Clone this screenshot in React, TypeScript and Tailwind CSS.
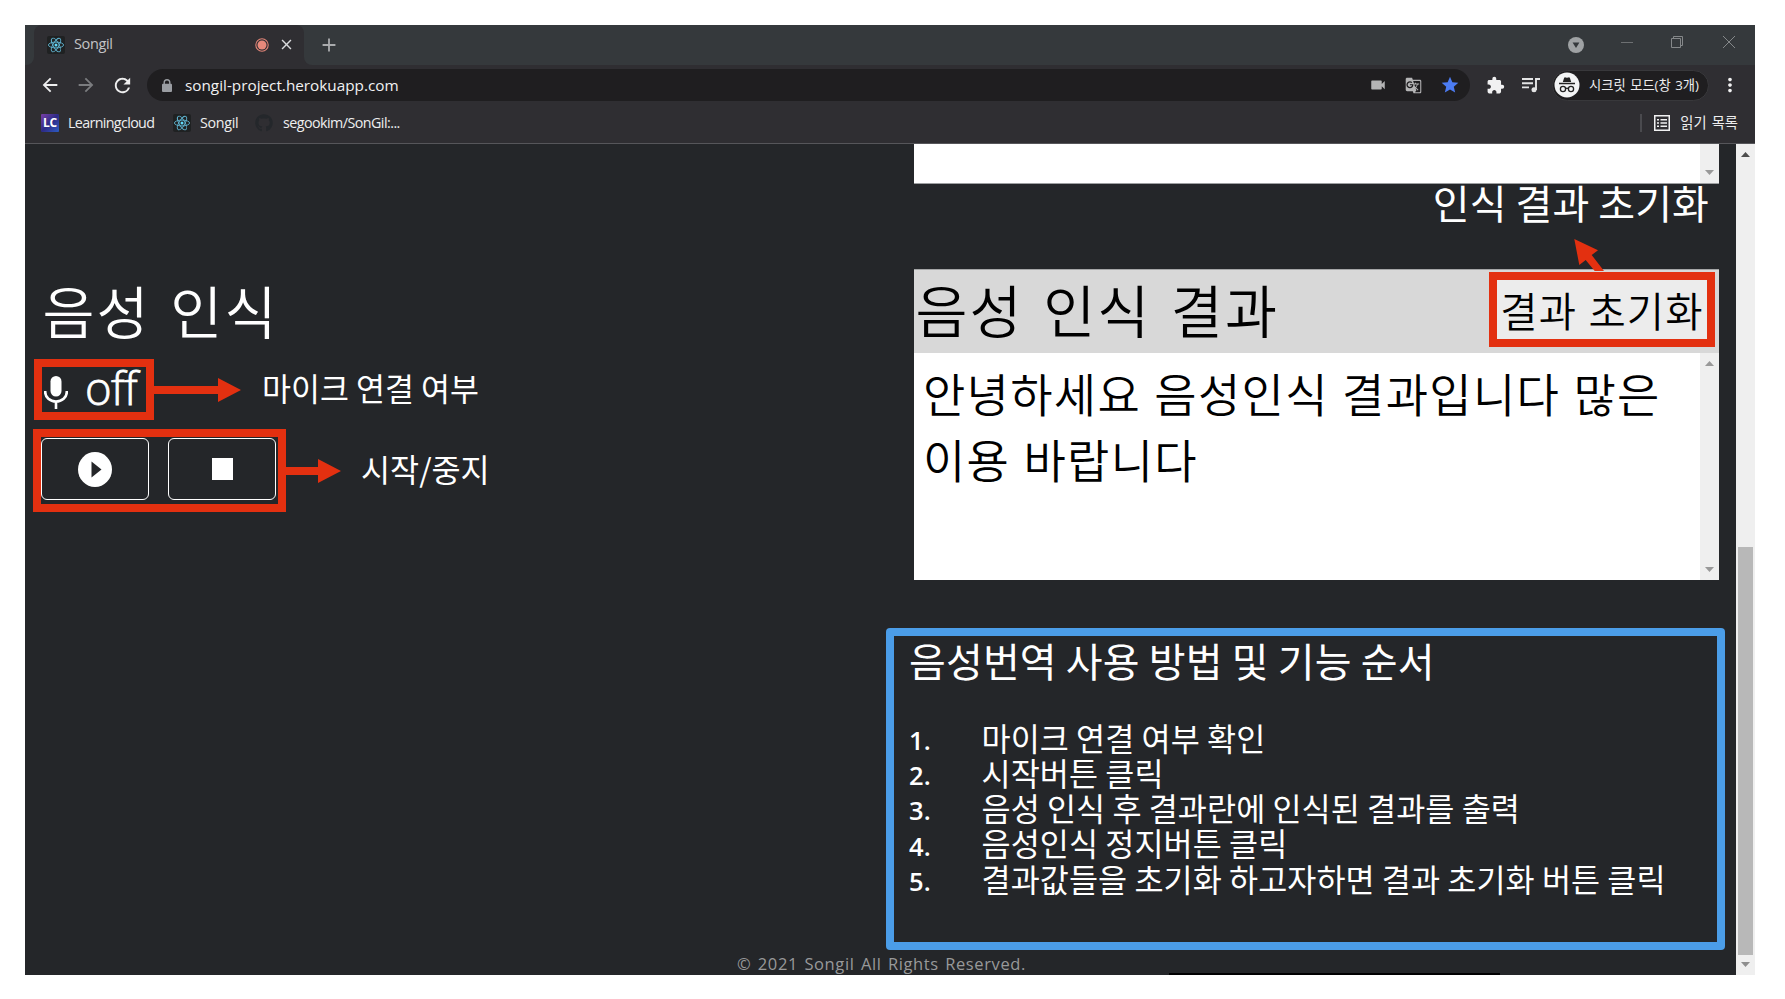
import React from 'react';
import {
  MdAdd,
  MdArrowBack,
  MdArrowForward,
  MdClose,
  MdExtension,
  MdGTranslate,
  MdMoreVert,
  MdRefresh,
  MdStar,
  MdVideocam,
} from 'react-icons/md';
import { FaGithub } from 'react-icons/fa';

const steps = [
  '마이크 연결 여부 확인',
  '시작버튼 클릭',
  '음성 인식 후 결과란에 인식된 결과를 출력',
  '음성인식 정지버튼 클릭',
  '결과값들을 초기화 하고자하면 결과 초기화 버튼 클릭',
];

function ReactLogo() {
  return (
    <svg viewBox="0 0 18 18" className="size-[18px] shrink-0">
      <rect width="18" height="18" rx="2" fill="#1f2122" />
      <g fill="none" stroke="#5fb2cf" strokeWidth="0.9">
        <ellipse cx="9" cy="9" rx="7.6" ry="2.9" />
        <ellipse cx="9" cy="9" rx="7.6" ry="2.9" transform="rotate(60 9 9)" />
        <ellipse cx="9" cy="9" rx="7.6" ry="2.9" transform="rotate(120 9 9)" />
      </g>
      <circle cx="9" cy="9" r="1.5" fill="#61dafb" />
    </svg>
  );
}

function Triangle({ up = false, color }: { up?: boolean; color: string }) {
  return (
    <svg viewBox="0 0 9 5" className="h-[5px] w-[9px]">
      <path d={up ? 'M0 5 4.500 0 9 5Z' : 'M0 0h9L4.500 5Z'} fill={color} />
    </svg>
  );
}

function TabStrip() {
  return (
    <div className="flex h-[40px] items-stretch bg-[#35393c]">
      <div className="w-[9px] bg-[#2f2e32]">
        <div className="h-full rounded-br-[8px] bg-[#35393c]" />
      </div>
      <div className="flex w-[270px] items-center rounded-t-[8px] bg-[#2f2e32] pr-[9px] pb-px pl-[13px]">
        <ReactLogo />
        <span className="ml-[9px] flex-1 pb-px text-[14.500px] leading-5 tracking-[-0.350px] text-[#c3c4c6]">Songil</span>
        <svg viewBox="0 0 14 14" className="size-[14px]">
          <circle cx="7" cy="7" r="6.200" fill="none" stroke="#e08477" strokeWidth="1.100" />
          <circle cx="7" cy="7" r="4.500" fill="#e8897b" />
        </svg>
        <MdClose className="ml-[9px] size-[17px] text-[#dadbdd]" />
      </div>
      <div className="flex flex-1 items-center bg-[#2f2e32]">
        <div className="flex h-full w-full items-center rounded-bl-[8px] bg-[#35393c]">
          <MdAdd className="ml-[14px] size-[22px] text-[#a9abad]" />
          <div className="flex-1" />
          <svg viewBox="0 0 16 16" className="size-[16px]">
            <circle cx="8" cy="8" r="8" fill="#9fa2a4" />
            <path d="M4.600 5.600h6.800L8 11Z" fill="#35393c" />
          </svg>
          <svg viewBox="0 0 12 12" className="mb-[6px] ml-[37px] size-[12px]" stroke="#6d7072" fill="none">
            <path d="M0 6.500h12" />
          </svg>
          <svg viewBox="0 0 12 12" className="mb-[6px] ml-[38px] size-[12px]" stroke="#85888a" fill="none">
            <path d="M.5 2.500h9v9h-9ZM2.500 2.500v-2h9v9h-2" />
          </svg>
          <svg viewBox="0 0 12 12" className="mr-[20px] mb-[6px] ml-[40px] size-[12px]" stroke="#85888a" fill="none">
            <path d="m0 0 12 12M12 0 0 12" />
          </svg>
        </div>
      </div>
    </div>
  );
}

function Toolbar() {
  return (
    <div className="flex h-[40px] items-center">
      <MdArrowBack className="ml-[14px] size-[22px] text-[#eeeeef]" />
      <MdArrowForward className="ml-[14px] size-[22px] text-[#7b7c7f]" />
      <MdRefresh className="ml-[14px] size-[23px] text-[#eeeeef]" />
      <div className="ml-[13px] flex h-[32px] w-[1323px] items-center rounded-full bg-[#1f1e20]">
        <svg viewBox="0 0 10 13" className="ml-[15px] h-[13px] w-[10px]">
          <path d="M2.200 6V3.600a2.800 2.800 0 0 1 5.600 0V6" fill="none" stroke="#9a9da2" strokeWidth="1.400" />
          <rect y="4.800" width="10" height="8.200" rx="1" fill="#9a9da2" />
        </svg>
        <span className="ml-[13px] flex-1 text-[15.300px] leading-5 text-[#f1f1f2]">songil-project.herokuapp.com</span>
        <MdVideocam className="size-[18px] text-[#b5b5b6]" />
        <MdGTranslate className="ml-[18px] size-[17px] text-[#b5b5b6]" />
        <MdStar className="mr-[10px] ml-[18px] size-[20px] text-[#4c7cf3]" />
      </div>
      <MdExtension className="ml-[16px] size-[19px] text-[#f1f1f2]" />
      <svg viewBox="0 0 18 16" className="ml-[17px] h-[16px] w-[18px]" fill="none" stroke="#e4e4e5" strokeWidth="1.900">
        <path d="M0 2h11M0 6.200h11M0 10.400h7M14 13V2h4" />
        <circle cx="12" cy="12.800" r="2.500" fill="#e4e4e5" stroke="none" />
      </svg>
      <div className="ml-[12px] flex h-[31px] w-[157px] items-center rounded-full border border-[#38383b] bg-[#1f1e20]">
        <svg viewBox="0 0 26 26" className="ml-px size-[26px]">
          <circle cx="13" cy="13" r="12.500" fill="#f3f4f5" />
          <path d="M8.800 10 10 6.200q.4-1.200 1.600-.8L13 5.800l1.400-.4q1.200-.4 1.600.8L17.200 10Z" fill="#222" />
          <path d="M5 11.500h16" stroke="#222" strokeWidth="1.500" />
          <g fill="none" stroke="#222" strokeWidth="1.300">
            <circle cx="9" cy="17" r="2.600" />
            <circle cx="17" cy="17" r="2.600" />
            <path d="M11.600 16.600q1.400-.8 2.800 0" />
          </g>
        </svg>
        <span className="ml-[9px] text-[13.300px] leading-5 [word-spacing:1px] whitespace-nowrap text-[#ededee]">시크릿 모드(창 3개)</span>
      </div>
      <MdMoreVert className="ml-[10px] size-[22px] text-[#f1f1f2]" />
    </div>
  );
}

function Bookmarks() {
  return (
    <div className="flex h-[39px] items-center border-b border-[#56565a] pb-[3px] pl-[16px] text-[14.300px] leading-5 tracking-[-0.650px] text-[#eeeeef]">
      <div className="flex size-[18px] items-center justify-center rounded-[1px] bg-linear-to-br from-[#7b3fa8] via-[#2d2a86] to-[#2a5cc4] text-[12px] font-bold tracking-tight text-white">
        LC
      </div>
      <span className="ml-[9px] w-[105px]">Learningcloud</span>
      <ReactLogo />
      <span className="ml-[9px] w-[55px] tracking-[-0.300px]">Songil</span>
      <FaGithub className="size-[18px] text-[#24272b]" />
      <span className="ml-[10px] flex-1 tracking-[-0.550px]">segookim/SonGil:...</span>
      <div className="h-[18px] w-[2px] bg-[#4a4a4e]" />
      <svg viewBox="0 0 16 16" className="ml-[12px] size-[16px]" fill="none" stroke="#f1f1f2" strokeWidth="1.500">
        <rect x=".75" y=".75" width="14.500" height="14.500" />
        <path d="M3 4.800h2M3 8h2M3 11.200h2M6.500 4.800H13M6.500 8H13M6.500 11.200H13" />
      </svg>
      <span className="mr-[17px] ml-[10px] text-[14.300px] tracking-normal [word-spacing:1.300px] whitespace-nowrap">읽기 목록</span>
    </div>
  );
}

function VoiceControls() {
  return (
    <section className="w-[889px] pt-[127px] pl-[16px] text-white">
      <h1 className="h-[76px] pl-[1.500px] text-[56.500px] leading-[76px] font-[350] tracking-[2.100px] [word-spacing:5px]">음성 인식</h1>
      <div className="mt-[12px] -ml-[7px] flex h-[61px] items-center">
        <div className="flex h-full w-[120px] items-center border-8 border-[#e33010] pl-[2px]">
          <svg viewBox="0 0 24 33" className="mt-[5px] h-[33px] w-[24px]">
            <rect x="6.500" y="0" width="11" height="20.500" rx="5.500" fill="#fff" />
            <path d="M1.200 15v1a10.800 9.500 0 0 0 21.600 0v-1M12 26v7" fill="none" stroke="#fff" strokeWidth="2.600" />
          </svg>
          <span className="ml-[17px] pb-[4px] font-['Open_Sans'] text-[45.500px] leading-[45px] font-light tracking-[-0.700px] [-webkit-text-stroke:0.8px_white]">off</span>
        </div>
        <svg viewBox="0 0 87 24" className="h-[24px] w-[87px]">
          <path d="M0 8h64V0l23 12-23 12v-8H0Z" fill="#e33010" />
        </svg>
        <span className="ml-[21px] pb-[5px] text-[31.500px] leading-[40px] whitespace-nowrap">마이크 연결 여부</span>
      </div>
      <div className="mt-[9px] -ml-[8px] flex h-[83px] items-center">
        <div className="flex h-full w-[253px] items-start gap-[19px] border-8 border-[#e33010] pt-px">
          <button className="flex h-[62px] w-[108px] items-center justify-center rounded-[6px] border border-white">
            <svg viewBox="0 0 34 35" className="h-[35px] w-[34px]">
              <ellipse cx="17" cy="17.500" rx="17" ry="17.500" fill="#fff" />
              <path d="m13.500 9.500 10 8-10 8Z" fill="#242629" />
            </svg>
          </button>
          <button className="flex h-[62px] w-[108px] items-center justify-center rounded-[6px] border border-white">
            <span className="h-[22px] w-[21px] bg-white" />
          </button>
        </div>
        <svg viewBox="0 0 55 24" className="h-[24px] w-[55px]">
          <path d="M0 8h32V0l23 12-23 12v-8H0Z" fill="#e33010" />
        </svg>
        <span className="ml-[20px] pb-[5px] text-[31.600px] leading-[40px] whitespace-nowrap">시작/중지</span>
      </div>
    </section>
  );
}

function Results() {
  return (
    <section className="relative flex w-[822px] flex-col">
      <div className="flex h-[40px] w-[805px] justify-end border-b border-[#9d9fa1] bg-white">
        <div className="flex w-[19px] items-end justify-center bg-[#efefef] pb-[8px]">
          <Triangle color="#999" />
        </div>
      </div>
      <p className="h-[85px] w-[805px] pr-[10px] text-right text-[40px] leading-[36px] tracking-[0.080px] text-white">인식 결과 초기화</p>
      <div className="flex h-[84px] w-[805px] items-center justify-between border-t border-[#a5a6a7] bg-[#d8d8d8]">
        <h2 className="pb-[8px] pl-[1.500px] text-[56.500px] leading-[76px] font-[350] tracking-[2.100px] [word-spacing:4.800px] text-black">음성 인식 결과</h2>
        <button className="mr-[4px] mb-[4px] flex h-[75px] w-[226px] items-center justify-center border-8 border-[#e33010] bg-[#ececec] pt-px text-[40.500px] leading-[58px] font-[350] tracking-[1.200px] [word-spacing:1px] whitespace-nowrap text-black">
          결과 초기화
        </button>
      </div>
      <div className="flex h-[227px] w-[805px] bg-white">
        <p className="w-[786px] pt-[6px] pl-[9px] text-[46px] leading-[66.300px] font-[350] tracking-[1.300px] [word-spacing:1.700px] text-black">
          안녕하세요 음성인식 결과입니다 많은
          <br />
          이용 바랍니다
        </p>
        <div className="flex w-[19px] flex-col items-center justify-between bg-[#efefef] pt-[8px] pb-[8px]">
          <Triangle up color="#999" />
          <Triangle color="#999" />
        </div>
      </div>
      <div className="mt-[48px] -ml-[28px] h-[322px] w-[839px] rounded-[4px] bg-[#4b9de8] p-[8px]">
        <div className="h-full bg-[#242629] pl-[15px] text-white">
          <h3 className="pt-px text-[40px] leading-[46px] tracking-[0.140px]">음성번역 사용 방법 및 기능 순서</h3>
          <ol className="pt-[36.500px] text-[31.600px] leading-[35.300px] tracking-[0.080px]">
            {steps.map((step, i) => (
              <li key={step} className="flex h-[35.300px] items-center whitespace-nowrap">
                <span className="w-[72.500px] pt-[5px] font-['Open_Sans'] text-[25.500px] leading-[30px] font-semibold">{i + 1}.</span>
                <span>{step}</span>
              </li>
            ))}
          </ol>
        </div>
      </div>
      <svg viewBox="0 0 32 34" className="absolute top-[94px] left-[659px] h-[34px] w-[32px]">
        <path d="m1.300 1 23.700 11.300-6.300 4.700L31 33h-9.300L12.700 22l-6.400 5Z" fill="#e33010" />
      </svg>
    </section>
  );
}

export default function App() {
  return (
    <div className="h-[999px] w-[1785px] overflow-hidden bg-white p-[25px] font-['Open_Sans','Noto_Sans_CJK_KR',sans-serif]">
      <div className="flex h-[950px] w-[1730px] flex-col overflow-hidden bg-[#2f2e32]">
        <TabStrip />
        <Toolbar />
        <Bookmarks />
        <div className="flex h-[831px] bg-[#242629] font-['Noto_Sans_CJK_KR',sans-serif]">
          <main className="relative w-[1711px]">
            <div className="flex h-[806px]">
              <VoiceControls />
              <Results />
            </div>
            <footer className="flex h-[25px] items-start pl-[712px] font-['Open_Sans',sans-serif] text-[16.500px] leading-[27px] tracking-[0.600px] [word-spacing:1.600px] whitespace-nowrap text-[#98999a]">
              © 2021 Songil All Rights Reserved.
            </footer>
            <div className="absolute bottom-0 left-[1144px] h-[2px] w-[331px] bg-black" />
          </main>
          <div className="flex w-[19px] flex-col items-center bg-[#efefef] pt-[8px] pb-[8px]">
            <Triangle up color="#4d4d4d" />
            <div className="mt-[390px] h-[409px] w-[15px] bg-[#b8b8b8]" />
            <div className="mt-[7px] flex">
              <Triangle color="#8e8e8e" />
            </div>
          </div>
        </div>
      </div>
    </div>
  );
}
